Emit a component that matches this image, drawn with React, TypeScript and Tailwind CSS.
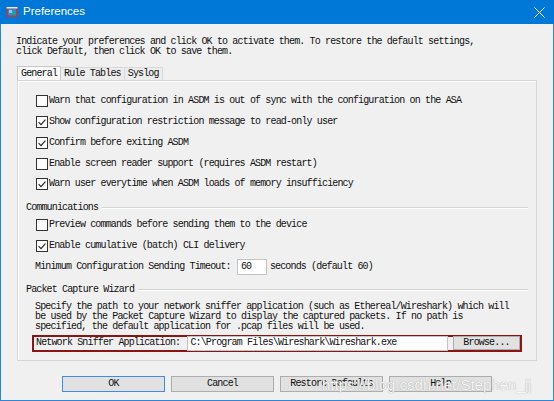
import React from 'react'

const mono = "font-['Liberation_Mono',monospace] text-[10px] tracking-[-0.85px] text-[#111] whitespace-pre leading-none"

function Check({ checked }: { checked?: boolean }) {
  return (
    <span className="w-[12px] h-[12px] border border-[#333] bg-[#fcfcfc] flex items-center justify-center shrink-0">
      {checked && (
        <svg width="10" height="10" viewBox="0 0 10 10">
          <path d="M1.6 5.2 L4 7.6 L8.4 2.6" fill="none" stroke="#222" strokeWidth="1.1" />
        </svg>
      )}
    </span>
  )
}

function CheckRow({ checked, label }: { checked?: boolean; label: string }) {
  return (
    <div className="h-[20.75px] flex items-center gap-[1px]">
      <Check checked={checked} />
      <span className={mono}>{label}</span>
    </div>
  )
}

function GroupHeader({ title }: { title: string }) {
  return (
    <div className="h-[14px] flex items-center gap-[4px] pl-[8px] pr-[8px]">
      <span className={mono}>{title}</span>
      <div className="flex-1 h-[2px] border-t border-[#d5d5d5] bg-white" />
    </div>
  )
}

function Btn({ label, primary }: { label: string; primary?: boolean }) {
  return (
    <div
      className={`w-[103px] h-[16px] flex items-center justify-center bg-[#e1e1e1] border ${
        primary ? 'border-[#3c8fe0]' : 'border-[#adadad]'
      }`}
    >
      <span className={mono}>{label}</span>
    </div>
  )
}

export default function App() {
  return (
    <div className="w-[554px] h-[401px] bg-[#f0f0f0] flex flex-col relative overflow-hidden">
      {/* Title bar */}
      <div className="h-[24px] bg-[#0078d7] flex items-center shrink-0">
        <svg width="12" height="12" viewBox="0 0 12 12" className="ml-[6px]">
          <rect x="0.5" y="1" width="11" height="10" fill="#c0392b" />
          <rect x="2" y="3" width="8" height="6.5" fill="#2e86de" />
          <rect x="3" y="4" width="3" height="3" fill="#7fd3f7" />
          <rect x="6" y="6" width="3" height="2.5" fill="#27ae60" />
          <rect x="0.5" y="1" width="11" height="1.5" fill="#e8e8e8" />
        </svg>
        <span className="ml-[5px] text-white text-[11.5px] font-['Liberation_Sans',sans-serif]">Preferences</span>
        <svg width="11" height="11" viewBox="0 0 11 11" className="ml-auto mr-[9px]">
          <path d="M0.5 0.5 L10.5 10.5 M10.5 0.5 L0.5 10.5" stroke="#fff" strokeWidth="1" />
        </svg>
      </div>

      {/* Body */}
      <div className="flex-1 border-x border-b border-[#2b86dc] flex flex-col">
        <div className={`${mono} pl-[15px] pt-[13px] leading-[12px]`}>
          {'Indicate your preferences and click OK to activate them. To restore the default settings,\nclick Default, then click OK to save them.'}
        </div>

        {/* Tabs */}
        <div className="ml-[16px] mt-[9px] h-[14px] flex items-end">
          <div className="h-[14px] px-[3px] flex items-center bg-[#f9f9f9] border border-b-0 border-[#c9c9c9]">
            <span className={mono}>General</span>
          </div>
          <div className="h-[13px] px-[3px] flex items-center bg-[#ececec] border-t border-r border-[#d9d9d9]">
            <span className={mono}>Rule Tables</span>
          </div>
          <div className="h-[13px] px-[3px] flex items-center bg-[#ececec] border-t border-r border-[#d9d9d9]">
            <span className={mono}>Syslog</span>
          </div>
        </div>

        {/* Panel */}
        <div className="ml-[16px] w-[520px] h-[281px] border border-[#d6d6d6] shadow-[inset_1px_1px_0_#ffffff] flex flex-col pt-[10px]">
          <div className="pl-[18px]">
            <CheckRow label="Warn that configuration in ASDM is out of sync with the configuration on the ASA" />
            <CheckRow checked label="Show configuration restriction message to read-only user" />
            <CheckRow checked label="Confirm before exiting ASDM" />
            <CheckRow label="Enable screen reader support (requires ASDM restart)" />
            <CheckRow checked label="Warn user everytime when ASDM loads of memory insufficiency" />
          </div>

          <div className="mt-[6px]">
            <GroupHeader title="Communications" />
          </div>
          <div className="pl-[18px]">
            <CheckRow label="Preview commands before sending them to the device" />
            <CheckRow checked label="Enable cumulative (batch) CLI delivery" />
          </div>
          <div className="h-[20.5px] pl-[17px] flex items-center">
            <span className={mono}>Minimum Configuration Sending Timeout: </span>
            <div className="ml-[1px] w-[30px] h-[16px] bg-white border border-[#c4c4c4] flex items-center pl-[3px]">
              <span className={mono}>60</span>
            </div>
            <span className={`${mono} ml-[3px]`}>seconds (default 60)</span>
          </div>

          <div className="mt-[6px]">
            <GroupHeader title="Packet Capture Wizard" />
          </div>
          <div className={`${mono} pl-[17px] mt-[5px] leading-[11.5px]`}>
            {'Specify the path to your network sniffer application (such as Ethereal/Wireshark) which will\nbe used by the Packet Capture Wizard to display the captured packets. If no path is\nspecified, the default application for .pcap files will be used.'}
          </div>
          <div className="ml-[14px] mt-[3px] w-[490px] h-[17px] border-2 border-[#8b1414] flex items-center pl-[2px]">
            <span className={mono}>Network Sniffer Application: </span>
            <div className="ml-[2px] w-[261px] h-[15px] bg-white border border-[#c4c4c4] flex items-center pl-[2px]">
              <span className={mono}>C:\Program Files\Wireshark\Wireshark.exe</span>
            </div>
            <div className="ml-[5px] w-[67px] h-[14px] bg-[#e1e1e1] border border-[#adadad] flex items-center justify-center">
              <span className={mono}>Browse...</span>
            </div>
          </div>
        </div>

        {/* Buttons */}
        <div className="ml-[61px] mt-[15px] flex gap-[6px]">
          <Btn label="OK" primary />
          <Btn label="Cancel" />
          <Btn label="Restore Defaults" />
          <Btn label="Help" />
        </div>
      </div>

      {/* watermark */}
      <div className="absolute left-[322px] top-[374px] text-[15px] font-['Liberation_Sans',sans-serif] text-[#f7f7f7] [text-shadow:0_0_1px_#8c8c8c] pointer-events-none">
        https://blog.csdn.net/Stephen_jj
      </div>
    </div>
  )
}
